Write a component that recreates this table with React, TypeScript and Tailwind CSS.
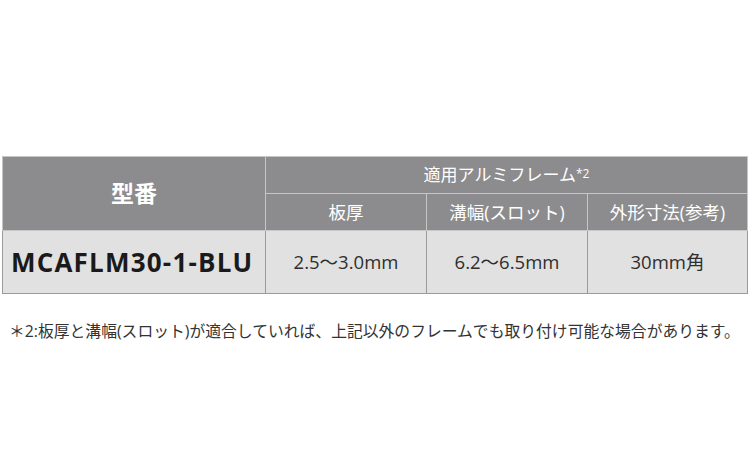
export default function App() {
  const font = { fontFamily: '"Open Sans", "Noto Sans CJK JP", sans-serif' }

  return (
    <div className="w-[750px] h-[450px] bg-white pt-[156px] pl-[2px]" style={font}>
      <table className="border-collapse table-fixed w-[745px]">
        <colgroup>
          <col className="w-[263px]" />
          <col className="w-[161px]" />
          <col className="w-[161px]" />
          <col className="w-[160px]" />
        </colgroup>
        <tbody>
          <tr className="h-[37px] bg-[#8c8c8e] text-white">
            <td rowSpan={2} className="border border-[#c6c6c6] text-center text-[23px] font-bold">
              型番
            </td>
            <td colSpan={3} className="border border-[#c6c6c6] text-center text-[17px]">
              適用アルミフレーム<sup className="text-[12px] relative -top-[3px]">*2</sup>
            </td>
          </tr>
          <tr className="h-[37px] bg-[#8c8c8e] text-white text-[17.5px]">
            <td className="border border-[#c6c6c6] text-center">板厚</td>
            <td className="border border-[#c6c6c6] text-center">溝幅(スロット)</td>
            <td className="border border-[#c6c6c6] text-center">外形寸法(参考)</td>
          </tr>
          <tr className="h-[63px] bg-[#e1e1e1] text-[#2e2e2e] text-[18.5px]">
            <td className="border border-[#9a9a9a] pl-[8px] text-[26px] font-bold text-[#1a1a1a] tracking-[1.2px]">
              MCAFLM30-1-BLU
            </td>
            <td className="border border-[#9a9a9a] text-center">2.5～3.0mm</td>
            <td className="border border-[#9a9a9a] text-center">6.2～6.5mm</td>
            <td className="border border-[#9a9a9a] text-center">30mm角</td>
          </tr>
        </tbody>
      </table>
      <p className="mt-[26px] pl-[7px] text-[15.8px] text-[#333] whitespace-nowrap">
        ＊2:板厚と溝幅(スロット)が適合していれば、上記以外のフレームでも取り付け可能な場合があります。
      </p>
    </div>
  )
}
